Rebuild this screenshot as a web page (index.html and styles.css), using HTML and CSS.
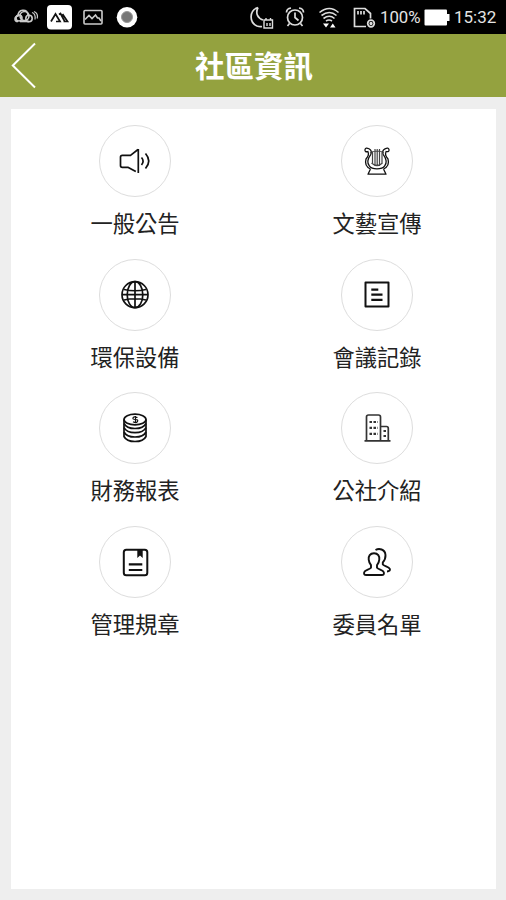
FILE: index.html
```html
<!DOCTYPE html>
<html lang="zh-TW">
<head>
    <meta charset="UTF-8">
    <meta name="viewport" content="width=device-width, initial-scale=1.0">
    <title>社區資訊</title>
    <link rel="stylesheet" href="styles.css">
</head>
<body>
    <!-- 狀態列 -->
    <div class="status-bar">
        <svg class="status-left" width="140" height="34" viewBox="0 0 140 34" fill="none" stroke="#ccc">
            <g stroke-width="1.600">
                <path d="M18 21.500c-4 0-4-5 0-5.500c0-7 9-8 10-1"/>
                <circle cx="19" cy="18" r="3"/>
                <circle cx="24.500" cy="16" r="4.500"/>
                <circle cx="29" cy="18.500" r="3.200"/>
                <path d="M20 21.500h9"/>
                <path d="M32 12.500c3 1 3.500 4 3 7M34 11.500c3.500 1.500 4 4 3.200 7" stroke-width="1.200"/>
            </g>
            <rect x="47" y="5" width="25" height="24.500" rx="4" fill="#fff" stroke="none"/>
            <path d="M51 21.500l4.500-7.500 4.500 7.500h-4M59 14.500l1.500-1 4 7.500M62.500 14l5 7.500h-4" stroke="#111" stroke-width="1.700"/>
            <rect x="84" y="10.500" width="18" height="13.500" rx="1" stroke-width="1.600"/>
            <path d="M85 19.500l4-4 3 3 3.500-3.500 2 3h1.500l2 3" stroke-width="1.600"/>
            <circle cx="127" cy="17.300" r="10.300" fill="#fff" stroke="none"/>
            <circle cx="127" cy="17" r="5.500" fill="#777" stroke="#999"/>
        </svg>
        <div class="status-right">
            <svg width="130" height="34" viewBox="247 0 130 34" fill="none" stroke="#ddd" stroke-width="1.700">
                <path d="M258 7.500c-9 3-9 15-1 18.500q3 1 5 .5M258 7.500c-3 6 0 11 5 12.500"/>
                <path d="M264 20h8.500v8h-8.500zM266 20v-2M270.500 20v-2M267 23v3M270 23v3" stroke-width="1.400"/>
                <circle cx="295" cy="17.500" r="7.500"/>
                <path d="M295 12.500v5l3.500 3M286.500 12.500q0-4 4.500-4.500M303.500 12.500q0-4-4.500-4.500M289.500 23.500l-2 2.500M300.500 23.500l2 2.500"/>
                <path d="M319.500 12.500q10-8 19 0M321.500 15.500q8-6 15 0M323.500 18.500q6-4.500 11 0M326 21q3-2 6 0" stroke-width="1.600"/>
                <path d="M323 23.500h6l-3 4zM330 27.500h5.500l-2.700-4z" fill="#fff" stroke="none"/>
                <path d="M366 26.500h-11.500v-18h10.500l5.500 5v5M358 11v3.500M361 11v3.500M364 11v3.500"/>
                <circle cx="371" cy="23.500" r="3.300"/>
                <circle cx="371" cy="23.500" r=".8"/>
            </svg>
            <span class="percent">100%</span>
            <svg class="battery" width="26" height="17" viewBox="0 0 26 17" fill="#fff">
                <rect x=".5" y=".5" width="22.500" height="16" rx="1"/>
                <rect x="23" y="5" width="2.500" height="7"/>
            </svg>
            <span class="time">15:32</span>
        </div>
    </div>

    <!-- 標題列 -->
    <div class="header">
        <svg class="back" width="40" height="63" viewBox="0 0 40 63" fill="none" stroke="#fff" stroke-width="2">
            <path d="M35 9.500L12.800 31.500 35 53.500"/>
        </svg>
        <h1>社區資訊</h1>
    </div>

    <!-- 功能選單 -->
    <div class="container">
        <div class="menu-item">
            <div class="menu-icon">
                <svg class="icon" viewBox="0 0 32 32">
                    <path d="M19.300 4v24M19 4.500l-7.500 5.800H3.300q-1.800 0-1.800 1.800v8.500q0 1.800 1.800 1.800h6l7.500 4"/>
                    <path d="M22.500 12.500q3.200 3.700 0 7.500M26.500 8.500q6.500 7.500 0 15"/>
                </svg>
            </div>
            <div class="menu-label">一般公告</div>
        </div>
        <div class="menu-item">
            <div class="menu-icon">
                <svg class="icon" viewBox="0 0 32 32" stroke-width="1.300">
                    <path d="M7.500 6.500q-4 1-3.500-1.800t4-.9 1.800 5.500q-5 7-1.500 11.500 2 3 7.700 3t7.700-3q3.500-4.500-1.500-11.500-1.700-3.700 1.800-5.500t4 .9-3.500 1.800"/>
                    <path d="M7 7q1.500 3-2 7-2 7 4.500 10M25 7q-1.500 3 2 7 2 7-4.500 10M9.500 24L7 29.200h18L22.500 24"/>
                    <path class="strings" d="M9 7.500q7-3 14 0M11.500 7v11M14 4v17M16.200 4v17M18.500 4v17M21 7v11M10.500 18q5.500 5 11 0"/>
                </svg>
            </div>
            <div class="menu-label">文藝宣傳</div>
        </div>
        <div class="menu-item">
            <div class="menu-icon">
                <svg class="icon" viewBox="0 0 32 32">
                    <circle cx="16" cy="15.700" r="13"/>
                    <ellipse cx="16" cy="15.700" rx="7.800" ry="13"/>
                    <path d="M16 3v26M3 15.700h26M5 10.500q11 2.500 22 0M5 21q11-2.500 22 0"/>
                </svg>
            </div>
            <div class="menu-label">環保設備</div>
        </div>
        <div class="menu-item">
            <div class="menu-icon">
                <svg class="icon" viewBox="0 0 32 32">
                    <rect x="4.500" y="3.500" width="23" height="24" stroke-width="2"/>
                    <path d="M10.300 10.700h7M10.300 15.700h11.200M10.300 20.800h11.200" stroke-width="2.200"/>
                </svg>
            </div>
            <div class="menu-label">會議記錄</div>
        </div>
        <div class="menu-item">
            <div class="menu-icon">
                <svg class="icon" viewBox="0 0 32 32">
                    <ellipse cx="16" cy="7.500" rx="11" ry="5.300"/>
                    <path d="M5 7.500v17q2.500 5 11 5t11-5v-17"/>
                    <path d="M5 11.500q2.500 5 11 5t11-5M5 15.700q2.500 5 11 5t11-5M5 20q2.500 5 11 5t11-5"/>
                    <path d="M18.500 5.500q-4-1.500-4.500.3t2.500 1.700 2 2-4.500.3M16.500 4v7" stroke-width="1.200"/>
                </svg>
            </div>
            <div class="menu-label">財務報表</div>
        </div>
        <div class="menu-item">
            <div class="menu-icon">
                <svg class="icon building" viewBox="0 0 32 32">
                    <path d="M3.500 28.800h26M5.500 28.500V5q0-2 2-2h10q2 0 2 2v23.500M20 14.500h5.500q1.800 0 1.800 2v12"/>
                    <path class="windows" d="M8.500 10h8.500M8.500 15.800h8.500M8.500 21.800h8.500M22.500 19h2.500M22.500 24h2.500"/>
                </svg>
            </div>
            <div class="menu-label">公社介紹</div>
        </div>
        <div class="menu-item">
            <div class="menu-icon">
                <svg class="icon" viewBox="0 0 32 32">
                    <rect x="4.800" y="3.800" width="23.500" height="25.500" rx="2.500" stroke-width="2"/>
                    <path d="M18.300 4h5.400v8l-2.700-2.500-2.700 2.500z" fill="#111" stroke="none"/>
                    <path d="M9.800 18.300h13.500M9.800 24h13.500" stroke-width="2.200"/>
                </svg>
            </div>
            <div class="menu-label">管理規章</div>
        </div>
        <div class="menu-item">
            <div class="menu-icon">
                <svg class="icon" viewBox="0 0 32 32" stroke-width="1.900">
                    <path d="M13 7.200c-4 0-5.700 3-5.300 6.500.2 2.500 1 3.800 2.300 5.500v2.500c-1.500 2-6 2-6.800 4.500-.5 2 .3 2.800 2 2.800h15.600c1.700 0 2.500-.8 2-2.800-.8-2.500-5.300-2.500-6.800-4.500v-2.500c1.300-1.700 2.100-3 2.300-5.500.4-3.500-1.300-6.500-5.300-6.500z"/>
                    <path d="M14.500 4c3.500-2 9.500-1 10 5 .2 3-1 5.500-2.700 7.300v2.200c1.500 1.800 6 2.200 7 4.300.6 1.500-.3 2.700-2.800 2.700"/>
                </svg>
            </div>
            <div class="menu-label">委員名單</div>
        </div>
    </div>
</body>
</html>
```
FILE: styles.css
```css
* {
    margin: 0;
    padding: 0;
    box-sizing: border-box;
}

body {
    display: flex;
    flex-direction: column;
    height: 100vh;
    font-family: Roboto, 'Noto Sans CJK TC', sans-serif;
    background: #eee;
    color: #222;
    overflow: hidden;
}

.status-bar {
    display: flex;
    justify-content: space-between;
    height: 34px;
    background: #000;
    color: #e4e4e4;
    line-height: 36px;
}

.status-right {
    display: flex;
    align-items: center;
    padding-right: 10px;
}

.percent {
    width: 41px;
    margin-left: 3px;
    font-size: 16.8px;
    white-space: nowrap;
}

.battery {
    margin: 0 3px;
}

.time {
    width: 43px;
    padding-left: 1px;
    font-size: 17px;
    white-space: nowrap;
}

.header {
    display: flex;
    align-items: center;
    height: 63px;
    background: #94a23f;
    color: #fff;
}

.header h1 {
    flex: 1;
    padding-right: 38px;
    font-family: 'Noto Sans CJK TC', sans-serif;
    font-size: 29.5px;
    font-weight: bold;
    line-height: 61px;
    height: 63px;
    text-align: center;
}

.container {
    flex: 1;
    display: grid;
    grid-template-columns: repeat(2, 242px);
    grid-auto-rows: 133.6px;
    margin: 12px 10px 11px 11px;
    padding: 16px 0 0 3px;
    background: #fff;
    overflow: hidden;
}

.menu-item {
    display: flex;
    flex-direction: column;
    align-items: center;
}

.menu-icon {
    display: flex;
    align-items: center;
    justify-content: center;
    width: 72px;
    height: 72px;
    border: 1px solid #ddd;
    border-radius: 50%;
}

.icon {
    width: 32px;
    height: 32px;
    fill: none;
    stroke: #111;
    stroke-linejoin: round;
}

.icon:not([stroke-width]) {
    stroke-width: 1.7;
}

.strings {
    stroke: #444;
    stroke-width: 1.2;
}

.building {
    stroke: #333;
}

.windows {
    stroke-width: 2.2;
    stroke-dasharray: 2.5 1.5;
}

.menu-label {
    margin-top: 8px;
    font-family: 'Noto Sans CJK TC', sans-serif;
    font-size: 22.3px;
    line-height: 34px;
}
```
